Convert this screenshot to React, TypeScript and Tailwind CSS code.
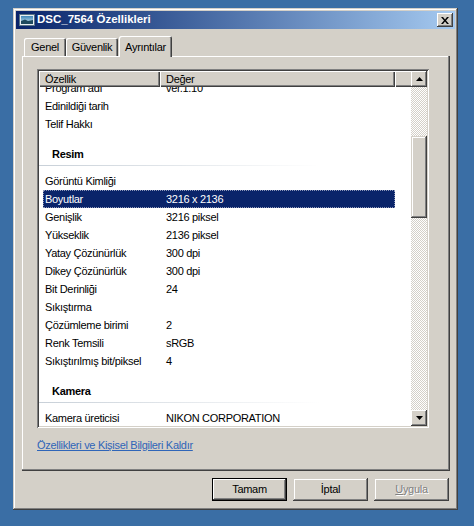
import React from "react";

const raised =
  "bg-[#d4d0c8] shadow-[inset_-1px_-1px_#404040,inset_1px_1px_#ffffff,inset_-2px_-2px_#808080,inset_2px_2px_#d4d0c8]";
const raisedThumb =
  "bg-[#d4d0c8] shadow-[inset_-1px_-1px_#404040,inset_1px_1px_#d4d0c8,inset_-2px_-2px_#808080,inset_2px_2px_#ffffff]";

type Row = { kind: "row"; name: string; value?: string; selected?: boolean } | { kind: "group"; name: string };

const rows: Row[] = [
  { kind: "row", name: "Program adı", value: "ver.1.10" },
  { kind: "row", name: "Edinildiği tarih" },
  { kind: "row", name: "Telif Hakkı" },
  { kind: "group", name: "Resim" },
  { kind: "row", name: "Görüntü Kimliği" },
  { kind: "row", name: "Boyutlar", value: "3216 x 2136", selected: true },
  { kind: "row", name: "Genişlik", value: "3216 piksel" },
  { kind: "row", name: "Yükseklik", value: "2136 piksel" },
  { kind: "row", name: "Yatay Çözünürlük", value: "300 dpi" },
  { kind: "row", name: "Dikey Çözünürlük", value: "300 dpi" },
  { kind: "row", name: "Bit Derinliği", value: "24" },
  { kind: "row", name: "Sıkıştırma" },
  { kind: "row", name: "Çözümleme birimi", value: "2" },
  { kind: "row", name: "Renk Temsili", value: "sRGB" },
  { kind: "row", name: "Sıkıştırılmış bit/piksel", value: "4" },
  { kind: "group", name: "Kamera" },
  { kind: "row", name: "Kamera üreticisi", value: "NIKON CORPORATION" },
];

function TitleIcon() {
  return (
    <svg width="16" height="16" viewBox="0 0 16 16">
      <defs>
        <linearGradient id="sky" x1="0" y1="0" x2="0" y2="1">
          <stop offset="0" stopColor="#3f86b8" />
          <stop offset="1" stopColor="#d8ecf6" />
        </linearGradient>
      </defs>
      <rect x="0.5" y="2.5" width="15" height="11" fill="#e8eef2" stroke="#5a7486" />
      <rect x="2" y="4" width="12" height="8" fill="url(#sky)" />
      <path d="M2 12 L2 9 L6 7.5 L9 9 L14 8 L14 12 Z" fill="#1f4a5e" />
    </svg>
  );
}

function Tri({ up }: { up: boolean }) {
  return (
    <svg width="7" height="4" viewBox="0 0 7 4">
      {up ? <path d="M3.5 0 L7 4 L0 4 Z" fill="#000" /> : <path d="M0 0 L7 0 L3.5 4 Z" fill="#000" />}
    </svg>
  );
}

export default function App() {
  return (
    <div className="w-[474px] h-[526px] bg-[#3a6ea5] pt-[8px] pl-[13px] font-['Liberation_Sans',Arial,sans-serif] text-[11px] tracking-[-0.3px] text-black overflow-hidden">
      <div className="w-[445px] h-[502px] bg-[#d4d0c8] p-[3px] flex flex-col shadow-[inset_-1px_-1px_#404040,inset_1px_1px_#d4d0c8,inset_-2px_-2px_#808080,inset_2px_2px_#ffffff]">
        {/* Title bar */}
        <div className="h-[18px] flex items-center bg-gradient-to-r from-[#0a246a] to-[#a6caf0] pl-[3px] pr-[2px]">
          <TitleIcon />
          <span className="ml-[2px] text-white font-bold text-[11.5px] tracking-normal leading-none">
            DSC_7564 Özellikleri
          </span>
          <div className={`ml-auto w-[16px] h-[14px] flex items-center justify-center ${raised}`}>
            <svg width="8" height="7" viewBox="0 0 8 7">
              <path d="M0 0 L2 0 L4 2.5 L6 0 L8 0 L5 3.5 L8 7 L6 7 L4 4.5 L2 7 L0 7 L3 3.5 Z" fill="#000" />
            </svg>
          </div>
        </div>

        {/* Tabs */}
        <div className="mt-[7px] ml-[6px] pl-[2px] h-[20px] flex items-end">
          <div className="w-[42px] h-[18px] rounded-t-[2px] shadow-[inset_1px_1px_#ffffff,inset_-1px_0_#404040,inset_-2px_0_#808080] flex items-center justify-center pt-[1px]">
            Genel
          </div>
          <div className="w-[52px] h-[18px] rounded-t-[2px] shadow-[inset_1px_1px_#ffffff,inset_-1px_0_#404040,inset_-2px_0_#808080] flex items-center justify-center pt-[1px]">
            Güvenlik
          </div>
          <div className="relative z-10 ml-[1px] mb-[-1px] w-[53px] h-[21px] bg-[#d4d0c8] rounded-t-[2px] shadow-[inset_1px_1px_#ffffff,inset_-1px_0_#404040,inset_-2px_0_#808080] flex items-start justify-center pt-[3px]">
            Ayrıntılar
          </div>
        </div>

        {/* Panel */}
        <div className="ml-[6px] w-[428px] h-[415px] pt-[13px] pl-[15px] flex flex-col shadow-[inset_-1px_-1px_#404040,inset_-2px_-2px_#808080,inset_1px_1px_#ffffff]">
          {/* List view */}
          <div className="w-[392px] h-[359px] p-[2px] bg-white flex shadow-[inset_1px_1px_#808080,inset_-1px_-1px_#ffffff,inset_2px_2px_#404040,inset_-2px_-2px_#d4d0c8]">
            <div className="flex-1 flex flex-col overflow-hidden">
              {/* Header */}
              <div className="h-[16px] flex shrink-0 bg-[#d4d0c8] relative z-10">
                <div className="w-[121px] h-full pl-[6px] flex items-center shadow-[inset_1px_1px_#ffffff,inset_-1px_-1px_#404040,inset_-2px_-2px_#808080]">
                  Özellik
                </div>
                <div className="w-[235px] h-full pl-[6px] flex items-center shadow-[inset_1px_1px_#ffffff,inset_-1px_-1px_#404040,inset_-2px_-2px_#808080]">
                  Değer
                </div>
                <div className="flex-1 h-full shadow-[inset_1px_1px_#ffffff,inset_0_-1px_#404040,inset_0_-2px_#808080]" />
              </div>
              {/* Body */}
              <div className="flex-1 overflow-hidden">
                <div className="mt-[-8px] flex flex-col">
                  {rows.map((r, i) =>
                    r.kind === "group" ? (
                      <div key={i} className="h-[39px] flex flex-col shrink-0">
                        <div className="mt-[12px] h-[18px] leading-[18px] pl-[13px] font-bold">{r.name}</div>
                        <div className="mt-[2px] h-[1px] w-[281px] bg-gradient-to-r from-[#c8d0d8] to-[#ffffff]" />
                      </div>
                    ) : (
                      <div
                        key={i}
                        className={`h-[18px] shrink-0 ml-[4px] w-[352px] flex items-center ${
                          r.selected
                            ? "bg-[#0a246a] text-white outline-1 outline-dotted outline-[#8c96b8] -outline-offset-1"
                            : ""
                        }`}
                      >
                        <div className="w-[117px] pl-[2px] whitespace-nowrap">{r.name}</div>
                        <div className="pl-[6px] whitespace-nowrap">{r.value ?? ""}</div>
                      </div>
                    )
                  )}
                </div>
              </div>
            </div>
            {/* Scrollbar */}
            <div className="w-[16px] flex flex-col shrink-0">
              <div className={`h-[16px] shrink-0 flex items-center justify-center ${raised}`}>
                <Tri up />
              </div>
              <div className="h-[49px] shrink-0 bg-[repeating-conic-gradient(#d4d0c8_0%_25%,#ffffff_0%_50%)] bg-[length:2px_2px]" />
              <div className={`h-[82px] shrink-0 ${raisedThumb}`} />
              <div className="flex-1 bg-[repeating-conic-gradient(#d4d0c8_0%_25%,#ffffff_0%_50%)] bg-[length:2px_2px]" />
              <div className={`h-[16px] shrink-0 flex items-center justify-center ${raised}`}>
                <Tri up={false} />
              </div>
            </div>
          </div>
          {/* Link */}
          <div className="mt-[10px] leading-[14px]">
            <span className="text-[#2f65b8] underline underline-offset-[1px] cursor-pointer">
              Özellikleri ve Kişisel Bilgileri Kaldır
            </span>
          </div>
        </div>

        {/* Buttons */}
        <div className="mt-[7px] pr-[6px] flex justify-end gap-[6px]">
          <div className="w-[75px] h-[23px] bg-[#d4d0c8] flex items-center justify-center shadow-[inset_0_0_0_1px_#000000,inset_-2px_-2px_#404040,inset_2px_2px_#ffffff,inset_-3px_-3px_#808080]">
            Tamam
          </div>
          <div className={`w-[75px] h-[23px] flex items-center justify-center ${raisedThumb}`}>İptal</div>
          <div className={`w-[75px] h-[23px] flex items-center justify-center text-[#808080] [text-shadow:1px_1px_0_#ffffff] ${raisedThumb}`}>
            <span>
              <span className="underline underline-offset-[1px]">U</span>ygula
            </span>
          </div>
        </div>
      </div>
    </div>
  );
}
